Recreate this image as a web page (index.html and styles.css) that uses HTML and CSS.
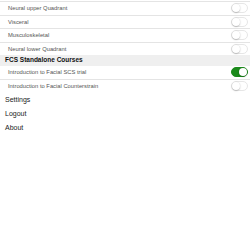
FILE: index.html
```html
<!DOCTYPE html>
<html>
<head>
<meta charset="utf-8">
<link rel="stylesheet" href="styles.css">
</head>
<body>
<div class="list first">
  <div class="row"><span class="label">Neural upper Quadrant</span><span class="toggle"></span></div>
  <div class="row"><span class="label">Visceral</span><span class="toggle"></span></div>
  <div class="row"><span class="label">Musculoskeletal</span><span class="toggle"></span></div>
  <div class="row"><span class="label">Neural lower Quadrant</span><span class="toggle"></span></div>
</div>
<div class="section-header">FCS Standalone Courses</div>
<div class="list second">
  <div class="row"><span class="label">Introduction to Facial SCS trial</span><span class="toggle on"></span></div>
  <div class="row"><span class="label">Introduction to Facial Counterstrain</span><span class="toggle"></span></div>
</div>
<nav class="menu">
  <div class="menu-item">Settings</div>
  <div class="menu-item">Logout</div>
  <div class="menu-item">About</div>
</nav>
</body>
</html>
```
FILE: styles.css
```css
html, body {
  margin: 0;
  padding: 0;
  background: #ffffff;
  font-family: "Liberation Sans", Arial, sans-serif;
}
body {
  width: 250px;
  height: 250px;
  overflow: hidden;
}
.list.first {
  padding-top: 1px;
}
.row {
  box-sizing: border-box;
  height: 13.5px;
  display: flex;
  align-items: center;
  justify-content: space-between;
  border-top: 1px solid #e4e4e4;
}
.list.second .row:first-child {
  border-top: none;
}
.label {
  padding-left: 8px;
  font-size: 5.8px;
  color: #555555;
  white-space: nowrap;
}
.toggle {
  position: relative;
  box-sizing: border-box;
  width: 17px;
  height: 10px;
  margin-right: 2px;
  border-radius: 5px;
  background: #ffffff;
  border: 1px solid #e6e6e6;
  flex-shrink: 0;
}
.toggle::after {
  content: "";
  position: absolute;
  top: 0;
  left: 0;
  width: 8px;
  height: 8px;
  border-radius: 50%;
  background: #ffffff;
  box-shadow: 0 0.5px 1.5px rgba(0, 0, 0, 0.35);
}
.toggle.on {
  background: #1b8a1b;
  border-color: #1b8a1b;
}
.toggle.on::after {
  left: auto;
  right: 0;
}
.section-header {
  height: 10.5px;
  line-height: 10.5px;
  padding-left: 5px;
  background: #efefef;
  font-size: 6.5px;
  font-weight: bold;
  color: #111111;
}
.menu {
  display: flex;
  flex-direction: column;
}
.menu-item {
  height: 14px;
  line-height: 14px;
  padding-left: 5px;
  font-size: 7px;
  color: #222222;
}
```
